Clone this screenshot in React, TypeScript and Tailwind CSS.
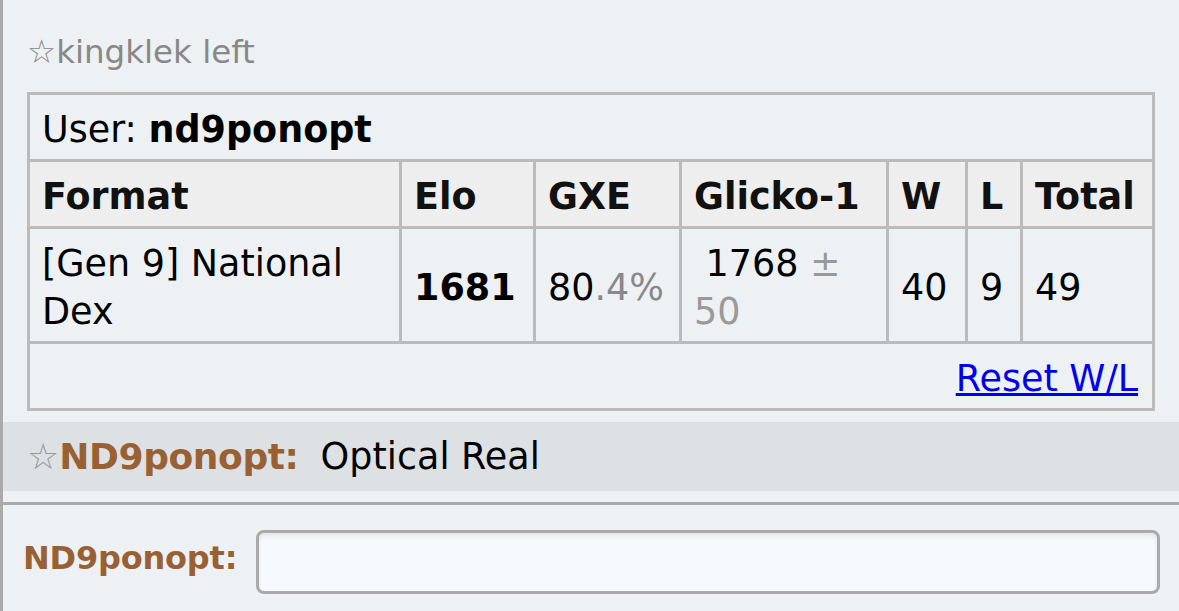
import React from "react";

const font = "font-['DejaVu_Sans',Verdana,sans-serif]";

export default function App() {
  return (
    <div className={`${font} w-[1179px] h-[611px] overflow-hidden bg-[#edf1f4] border-l-[3px] border-[#aaaaaa] flex flex-col`}>
      <div className="pl-[24px] pt-[30px] text-[32.5px] leading-[44px] text-[#888888]">☆kingklek left</div>
      <div className="pl-[24px] mt-[18px]">
        <table className="table-fixed border-collapse w-[1128px] text-[36.5px] leading-[48px] text-black border-[3px] border-[#bbbbbb]">
          <colgroup>
            <col className="w-[372px]" />
            <col className="w-[134px]" />
            <col className="w-[146px]" />
            <col className="w-[207px]" />
            <col className="w-[79px]" />
            <col className="w-[55px]" />
            <col className="w-[132px]" />
          </colgroup>
          <tbody>
            <tr>
              <td colSpan={7} className="border-[3px] border-[#bbbbbb] px-[12px] pt-[11px] pb-[5px] h-[67px]">
                User: <strong className="font-bold">nd9ponopt</strong>
              </td>
            </tr>
            <tr className="bg-[#eeeeee] font-bold text-[#111111]">
              <th className="border-[3px] border-[#bbbbbb] px-[12px] pt-[11px] pb-[5px] text-left h-[67px]">Format</th>
              <th className="border-[3px] border-[#bbbbbb] px-[12px] pt-[11px] pb-[5px] text-left">Elo</th>
              <th className="border-[3px] border-[#bbbbbb] px-[12px] pt-[11px] pb-[5px] text-left">GXE</th>
              <th className="border-[3px] border-[#bbbbbb] px-[12px] pt-[11px] pb-[5px] text-left">Glicko-1</th>
              <th className="border-[3px] border-[#bbbbbb] px-[12px] pt-[11px] pb-[5px] text-left">W</th>
              <th className="border-[3px] border-[#bbbbbb] px-[12px] pt-[11px] pb-[5px] text-left">L</th>
              <th className="border-[3px] border-[#bbbbbb] px-[12px] pt-[11px] pb-[5px] text-left">Total</th>
            </tr>
            <tr>
              <td className="border-[3px] border-[#bbbbbb] px-[12px] pt-[11px] pb-[5px] align-middle h-[115px]">[Gen 9] National Dex</td>
              <td className="border-[3px] border-[#bbbbbb] px-[12px] pt-[11px] pb-[5px] align-middle font-bold">1681</td>
              <td className="border-[3px] border-[#bbbbbb] px-[12px] pt-[11px] pb-[5px] align-middle whitespace-nowrap">
                80<span className="text-[#888888]">.4%</span>
              </td>
              <td className="border-[3px] border-[#bbbbbb] px-[12px] pt-[11px] pb-[5px] align-middle">
                {"\u00a01768 "}
                <span className="text-[#999999]">±</span>
                <br />
                <span className="text-[#999999]">50</span>
              </td>
              <td className="border-[3px] border-[#bbbbbb] px-[12px] pt-[11px] pb-[5px] align-middle">40</td>
              <td className="border-[3px] border-[#bbbbbb] px-[12px] pt-[11px] pb-[5px] align-middle">9</td>
              <td className="border-[3px] border-[#bbbbbb] px-[12px] pt-[11px] pb-[5px] align-middle">49</td>
            </tr>
            <tr>
              <td colSpan={7} className="border-[3px] border-[#bbbbbb] pl-[12px] pr-[14px] pt-[11px] pb-[5px] text-right h-[67px]">
                <a href="#" className="text-[#0000ee] underline">Reset W/L</a>
              </td>
            </tr>
          </tbody>
        </table>
      </div>
      <div className="mt-[11px] h-[69px] bg-[#dde1e4] flex items-center pl-[24px] text-[36px] leading-[48px]">
        <span className="text-[#999999]">☆</span>
        <strong className="font-bold text-[#996133] tracking-[-0.4px]">ND9ponopt:</strong>
        <span className="ml-[22px] text-black text-[36.5px]">Optical Real</span>
      </div>
      <div className="mt-[11px] h-[3px] bg-[#aaaaaa]" />
      <div className="flex-1 flex items-start pl-[20px] pt-[25px]">
        <label className="text-[32px] leading-[44px] font-bold text-[#996133] mt-[6px] w-[233px] shrink-0 tracking-[-0.2px]">ND9ponopt:</label>
        <div className="w-[904px] h-[64px] rounded-[8px] border-[3px] border-[#aaaaaa] bg-[#f7fafc] shadow-[inset_0_3px_4px_rgba(0,0,0,0.08)]" />
      </div>
    </div>
  );
}
